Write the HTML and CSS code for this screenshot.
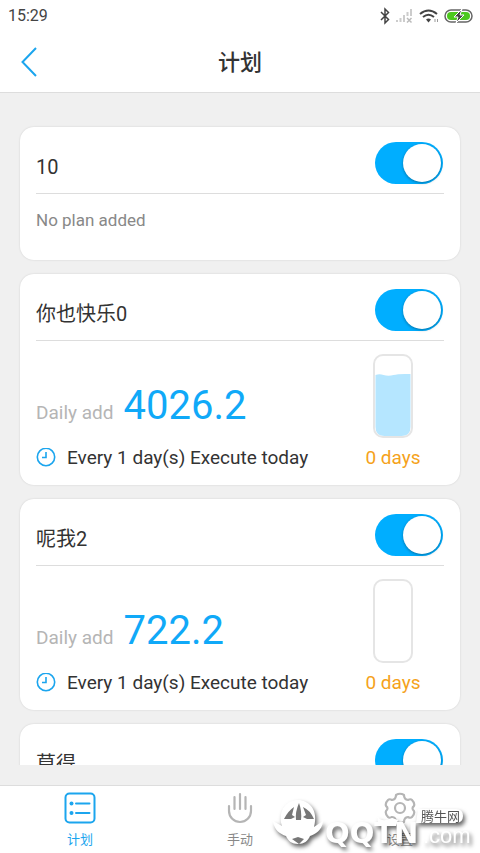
FILE: index.html
```html
<!DOCTYPE html>
<html lang="zh-CN">
<head>
<meta charset="utf-8">
<meta name="viewport" content="width=device-width, initial-scale=1">
<title>计划</title>
<link rel="stylesheet" href="styles.css">
</head>
<body>
<div class="status">
  <span class="time">15:29</span>
  <svg class="status-icons" width="96" height="18" viewBox="0 0 96 18" aria-hidden="true">
    <path d="M1 5l7.500 7.500L5 16V2l3.500 3.500L1 13" fill="none" stroke="#444" stroke-width="1.500"/>
    <g fill="#ccc">
      <path d="M16 13h2v2h-2zM19.500 11h2v4h-2zM23 8h2v7h-2zM26.500 5h2v4h-2zM30 2h2v7h-2z"/>
      <path d="M27 11l4.500 4.500M31.500 11L27 15.500" stroke="#bbb" stroke-width="1.500"/>
    </g>
    <g fill="none" stroke="#444" stroke-width="2">
      <path d="M40 7q8.500-7 17 0M43 10q5.500-4.500 11 0"/>
      <path d="M46 12.500q2.500-2 5 0l-2.500 3z" fill="#444" stroke="none"/>
    </g>
    <path d="M55 12v3M57.500 12v3" stroke="#999"/>
    <rect x="65" y="3" width="27" height="12" rx="6" fill="#fff" stroke="#666" stroke-width="1.500"/>
    <rect x="67" y="5" width="23" height="8" rx="4" fill="#4cc81e"/>
    <path d="M82 2l-8 8h4l-2 6 8-8h-4z" fill="#444" stroke="#fff"/>
  </svg>
</div>
<header class="header">
  <button class="back" type="button" aria-label="返回">
    <svg width="16" height="30" viewBox="0 0 16 30"><path d="M15 1L1.500 15 15 29" fill="none" stroke="#1ba5ee" stroke-width="2"/></svg>
  </button>
  <h1 class="title">计划</h1>
</header>

<main class="list">
  <section class="card">
    <div class="card-head">
      <label class="name" for="s1">10</label>
      <input class="switch" id="s1" type="checkbox" role="switch" checked>
    </div>
    <p class="empty">No plan added</p>
  </section>

  <section class="card">
    <div class="card-head">
      <label class="name" for="s2">你也快乐0</label>
      <input class="switch" id="s2" type="checkbox" role="switch" checked>
    </div>
    <div class="plan">
      <div class="details">
        <p class="amount"><span class="caption">Daily add</span><span class="value">4026.2</span></p>
        <p class="schedule">
          <svg width="20" height="20" viewBox="0 0 20 20" aria-hidden="true"><g fill="none" stroke="#1ba5ee" stroke-width="1.600"><circle cx="10" cy="9" r="8.700"/><path d="M10 4v5.500H6"/></g></svg>
          Every 1 day(s) Execute today
        </p>
      </div>
      <div class="remaining">
        <svg width="40" height="84" viewBox="0 0 40 84" aria-hidden="true">
          <path d="M2.500 21q4-1.500 8 0 5 1.500 10 0t17-1V73q0 9-9 9h-17q-9 0-9-9z" fill="#b5e6ff"/>
          <rect x="1" y="1" width="38" height="82" rx="9" fill="none" stroke="#e5e5e5" stroke-width="2"/>
        </svg>
        <span class="days">0 days</span>
      </div>
    </div>
  </section>

  <section class="card">
    <div class="card-head">
      <label class="name" for="s3">呢我2</label>
      <input class="switch" id="s3" type="checkbox" role="switch" checked>
    </div>
    <div class="plan">
      <div class="details">
        <p class="amount"><span class="caption">Daily add</span><span class="value">722.2</span></p>
        <p class="schedule">
          <svg width="20" height="20" viewBox="0 0 20 20" aria-hidden="true"><g fill="none" stroke="#1ba5ee" stroke-width="1.600"><circle cx="10" cy="9" r="8.700"/><path d="M10 4v5.500H6"/></g></svg>
          Every 1 day(s) Execute today
        </p>
      </div>
      <div class="remaining">
        <svg width="40" height="84" viewBox="0 0 40 84" aria-hidden="true">
          <rect x="1" y="1" width="38" height="82" rx="9" fill="none" stroke="#e5e5e5" stroke-width="2"/>
        </svg>
        <span class="days">0 days</span>
      </div>
    </div>
  </section>

  <section class="card">
    <div class="card-head">
      <label class="name" for="s4">莫得</label>
      <input class="switch" id="s4" type="checkbox" role="switch" checked>
    </div>
  </section>
</main>

<nav class="tabs">
  <a class="tab active" href="#plan">
    <svg width="32" height="32" viewBox="0 0 32 32" aria-hidden="true"><g fill="none" stroke="currentColor" stroke-width="2" stroke-linecap="round"><rect x="1.500" y="1.500" width="29" height="29" rx="4"/><path d="M12 11.500h13.500M12 21h13.500"/></g><g fill="currentColor"><circle cx="7.500" cy="11.500" r="2"/><circle cx="7.500" cy="21" r="2"/></g></svg>
    计划
  </a>
  <a class="tab" href="#manual">
    <svg width="32" height="32" viewBox="0 0 32 32" aria-hidden="true"><path d="M5 14v5a11 11 0 0 0 22 0v-5M10.500 17V5M16 17V2M21.500 17V5" fill="none" stroke="#b5b5b5" stroke-width="2.200" stroke-linecap="round"/></svg>
    手动
  </a>
  <a class="tab" href="#settings">
    <svg width="32" height="32" viewBox="0 0 32 32" aria-hidden="true"><g fill="none" stroke="#b5b5b5" stroke-width="2.200" stroke-linejoin="round"><circle cx="16" cy="16" r="5"/><path d="M12 3q4-2.500 8 0 0 4.500 4 5 2.500-1.500 4 0 3 3 2 6-3 2 0 5 1 3-2 6-1.500 1.500-4 0-4 .500-4 5-4 2-8 0 0-4.500-4-5-2.500 1.500-4 0-3-3-2-6 3-3 0-5-1-3 2-6 1.500-1.500 4 0 4-.500 4-5z"/></g></svg>
    设置
  </a>
  <svg class="mark" width="208" height="58" viewBox="0 0 208 58" aria-label="腾牛网 QQTN.com">
    <g fill="#fff">
      <path d="M1 26l9 5C5 14 16 5 26 5s21 9 16 27l9-6c-1 10-8 13-13 15-2 5-6 8-12 8s-10-3-12-8C8 39 2 35 1 26z"/>
      <path d="M146 14h38q7 0 7 7t-7 7h-40zM106 22q4 6 14 1l6 2-2 6h-14q-6-2-4-9z"/>
      <text class="mark-name" x="53" y="48">QQTN</text>
      <text class="mark-com" x="151" y="48">.com</text>
    </g>
    <path d="M27 8q-4 9-3 17h5q1-9-2-17zM12 24q4-8 10-12l-2 8 3 2-4 2zM42 24q-4-9-11-12l3 8-3 2 4 2zM20 44l6-2 6 2-5 5z" fill="#777"/>
    <text class="mark-cn" x="149" y="26">腾牛网</text>
  </svg>
</nav>
</body>
</html>
```
FILE: styles.css
```css
* {
  box-sizing: border-box;
}

body {
  margin: 0;
  height: 100vh;
  display: flex;
  flex-direction: column;
  background: #f0f0f0;
  color: #333;
  font-family: Roboto, "Noto Sans CJK SC", sans-serif;
  font-size: 19px;
  line-height: 24px;
}

h1,
p {
  margin: 0;
}

svg {
  display: block;
  flex: none;
}

.status {
  display: flex;
  justify-content: space-between;
  align-items: center;
  height: 32px;
  padding: 0 4px 0 8px;
  background: #fff;
  color: #444;
  font-size: 16px;
}

.header {
  display: grid;
  grid-template-columns: 60px 1fr 60px;
  align-items: center;
  height: 61px;
  background: #fff;
  border-bottom: 1px solid #ddd;
}

.back {
  padding: 0 0 0 21px;
  border: 0;
  background: none;
}

.title {
  padding-top: 2px;
  font-size: 22px;
  font-weight: 500;
  line-height: 32px;
  text-align: center;
}

.list {
  flex: 1;
  min-height: 0;
  overflow: hidden;
  display: flex;
  flex-direction: column;
  gap: 14px;
  margin-bottom: 20px;
  padding: 34px 20px 0;
}

.card {
  flex: none;
  padding: 0 16px;
  border-radius: 14px;
  background: #fff;
  box-shadow: 0 0 2px rgba(0, 0, 0, 0.15);
}

.card-head {
  display: flex;
  justify-content: space-between;
  height: 67px;
  padding-top: 15px;
  border-bottom: 1px solid #ddd;
}

.name {
  padding-top: 13px;
  font-size: 20px;
}

.switch {
  appearance: none;
  width: 68px;
  height: 42px;
  margin: 0 1px 0 0;
  padding: 2px;
  border-radius: 21px;
  background: #ccc;
}

.switch::before {
  content: "";
  display: block;
  width: 38px;
  height: 38px;
  border-radius: 50%;
  background: #fff;
  box-shadow: 0 1px 3px rgba(0, 0, 0, 0.35);
}

.switch:checked {
  background: #00aeff;
}

.switch:checked::before {
  margin-left: auto;
}

.empty {
  padding: 14px 0 28px;
  color: #888;
  font-size: 17px;
}

.plan {
  display: flex;
  justify-content: space-between;
  padding: 13px 0 15px;
}

.details {
  display: flex;
  flex-direction: column;
  justify-content: flex-end;
  gap: 16px;
}

.amount {
  display: flex;
  align-items: baseline;
  gap: 10px;
}

.caption {
  color: #b5b5b5;
}

.value {
  color: #10a9f8;
  font-size: 40px;
  line-height: 48px;
}

.schedule {
  display: flex;
  align-items: center;
  gap: 11px;
}

.remaining {
  display: flex;
  flex-direction: column;
  align-items: center;
  gap: 8px;
  width: 102px;
}

.days {
  color: #f5a21b;
}

.tabs {
  position: relative;
  display: grid;
  grid-template-columns: repeat(3, 1fr);
  height: 68px;
  border-top: 1px solid #ddd;
  background: #fff;
}

.tab {
  display: flex;
  flex-direction: column;
  align-items: center;
  gap: 6px;
  padding-top: 6px;
  color: #888;
  font-size: 13px;
  line-height: 20px;
  text-decoration: none;
}

.active {
  color: #1ba5ee;
}

.mark {
  position: absolute;
  right: 0;
  bottom: 0;
  filter: drop-shadow(2px 3px 2px rgba(0, 0, 0, 0.6));
  pointer-events: none;
}

.mark-name {
  font: bold 29px "DejaVu Sans", sans-serif;
}

.mark-com {
  font: 22px "Liberation Sans", sans-serif;
}

.mark-cn {
  fill: #555;
  font: 13px "Noto Sans CJK SC", sans-serif;
}
```
